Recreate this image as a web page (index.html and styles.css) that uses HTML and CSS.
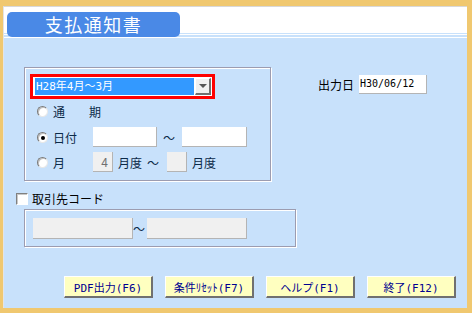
FILE: index.html
```html
<!DOCTYPE html>
<html lang="ja">
<head>
    <meta charset="UTF-8">
    <title>支払通知書</title>
    <link rel="stylesheet" href="styles.css">
</head>
<body>
    <div class="frame">
        <div class="window">
            <!-- Header -->
            <div class="header">
                <div class="title">支払通知書</div>
            </div>

            <!-- Main -->
            <div class="main">
                <div class="top-row">
                    <div class="group period-group">
                        <div class="combo-wrap">
                            <div class="combo">
                                <span class="combo-text">H28年4月～3月</span>
                                <span class="combo-btn">
                                    <svg width="8" height="5" viewBox="0 0 8 5"><path d="M0 0H8L4 4Z" fill="#555"/></svg>
                                </span>
                            </div>
                        </div>
                        <div class="row row-term">
                            <span class="radio"></span>
                            <span class="label">通</span>
                            <span class="label term-end">期</span>
                        </div>
                        <div class="row row-date">
                            <span class="radio checked"></span>
                            <span class="label label-col">日付</span>
                            <span class="field date-field"></span>
                            <span class="tilde date-tilde">～</span>
                            <span class="field date-field date-to"></span>
                        </div>
                        <div class="row row-month">
                            <span class="radio"></span>
                            <span class="label label-col">月</span>
                            <span class="field gray month-field">4</span>
                            <span class="label unit">月度</span>
                            <span class="tilde">～</span>
                            <span class="field gray month-field month-to"></span>
                            <span class="label unit">月度</span>
                        </div>
                    </div>

                    <div class="outdate">
                        <span class="outdate-label">出力日</span>
                        <span class="field outdate-field">H30/06/12</span>
                    </div>
                </div>

                <div class="check-row">
                    <span class="checkbox"></span>
                    <span class="check-label">取引先コード</span>
                </div>

                <div class="group code-group">
                    <span class="field gray code-field"></span>
                    <span class="tilde code-tilde">～</span>
                    <span class="field gray code-field"></span>
                </div>

                <!-- Function keys -->
                <div class="buttons">
                    <button class="fbtn">PDF出力(F6)</button>
                    <button class="fbtn">条件ﾘｾｯﾄ(F7)</button>
                    <button class="fbtn">ヘルプ(F1)</button>
                    <button class="fbtn">終了(F12)</button>
                </div>
            </div>
        </div>
    </div>
</body>
</html>
```

FILE: styles.css
```css
body {
    margin: 0;
    font-family: "Noto Sans CJK JP", "Noto Sans", sans-serif;
    font-size: 12px;
}

.frame {
    width: 472px;
    height: 313px;
    box-sizing: border-box;
    border-style: solid;
    border-color: #f0c870;
    border-width: 6px 5px 5px 3px;
}

.window {
    height: 100%;
    box-sizing: border-box;
    border-top: 1px solid #d8d8d8;
    border-left: 1px solid #e4e4e4;
    display: flex;
    flex-direction: column;
    background: #c8e1fb;
}

/* Header */
.header {
    height: 33px;
    flex-shrink: 0;
    background: linear-gradient(to bottom,
        #fff 0 26px,
        #c8e1fb 26px 27px,
        #fff 27px 28px,
        #c8e1fb 28px 30px,
        #fff 30px 31px,
        #c8e1fb 31px 33px);
}

.title {
    margin: 5px 0 0 3px;
    width: 173px;
    height: 25px;
    border-radius: 5px;
    background: #4a89e6;
    color: #fff;
    font-size: 18px;
    line-height: 25px;
    letter-spacing: 1.5px;
    text-align: center;
}

/* Main */
.main {
    flex: 1;
    padding: 27px 0 0 12px;
}

.top-row {
    display: flex;
    align-items: flex-start;
}

.group {
    border: 1px solid #9c9cb0;
    box-shadow: 1px 1px 0 #fff, inset 1px 1px 0 #fff;
    box-sizing: border-box;
}

.period-group {
    margin-left: 8px;
    width: 247px;
    height: 114px;
    padding: 6px 0 0 5px;
}

.combo-wrap {
    width: 185px;
    height: 25px;
    box-sizing: border-box;
    border: 3px solid #ff0000;
    padding: 1px;
    background: #fff;
}

.combo {
    height: 17px;
    display: flex;
    background: #fff;
}

.combo-text {
    flex: 1;
    margin: 0 1px;
    background: #3399ff;
    color: #fff;
    font-family: "DejaVu Sans Mono", "Noto Sans CJK JP", monospace;
    font-size: 11px;
    line-height: 17px;
    padding-left: 1px;
}

.combo-btn {
    width: 16px;
    height: 17px;
    box-sizing: border-box;
    background: #f0f0f0;
    border-top: 1px solid #fff;
    border-left: 1px solid #fff;
    border-right: 2px solid #707070;
    border-bottom: 2px solid #707070;
    display: flex;
    align-items: center;
    justify-content: center;
}

.row {
    display: flex;
    align-items: center;
    height: 20px;
    color: #0c2a48;
}

.row-term {
    margin-top: 2px;
}

.row-date {
    margin-top: 6px;
}

.row-month {
    margin-top: 5px;
}

.radio {
    width: 11px;
    height: 11px;
    margin-left: 7px;
    margin-right: 5px;
    border-radius: 50%;
    background: #fff;
    box-sizing: border-box;
    border: 1px solid;
    border-color: #7a7a7a #e8e8e8 #e8e8e8 #7a7a7a;
    box-shadow: inset 1px 1px 0 #c0c0c0;
    position: relative;
}

.radio.checked::after {
    content: "";
    position: absolute;
    left: 3px;
    top: 3px;
    width: 4px;
    height: 4px;
    border-radius: 50%;
    background: #000;
}

.term-end {
    margin-left: 24px;
}

.label-col {
    width: 40px;
}

.field {
    display: inline-block;
    box-sizing: border-box;
    background: #fff;
    border-right: 1px solid #b4b4b4;
    border-bottom: 1px solid #b4b4b4;
}

.field.gray {
    background: #f0f0f0;
}

.date-field {
    width: 64px;
    height: 20px;
}

.date-to {
    width: 65px;
}

.tilde {
    margin: 0 5px;
}

.date-tilde {
    margin: 0 7px 0 6px;
}

.month-field {
    width: 20px;
    height: 20px;
    color: #707070;
    text-align: right;
    padding-right: 4px;
    line-height: 19px;
}

.unit {
    margin-left: 5px;
}

.month-to {
    margin-left: 4px;
}

.row-month .tilde {
    margin: 0 4px 0 5px;
}

/* Output date */
.outdate {
    margin: 8px 0 0 47px;
    display: flex;
    align-items: center;
    color: #000;
}

.outdate-label {
    margin-right: 5px;
}

.outdate-field {
    width: 68px;
    height: 19px;
    line-height: 18px;
    padding-left: 1px;
    font-family: "DejaVu Sans Mono", monospace;
    font-size: 10px;
}

/* Checkbox */
.check-row {
    margin-top: 10px;
    height: 15px;
    display: flex;
    align-items: center;
}

.checkbox {
    width: 12px;
    height: 12px;
    margin-right: 4px;
    box-sizing: border-box;
    background: #fff;
    border: 1px solid;
    border-color: #808080 #fff #fff #808080;
    box-shadow: inset 1px 1px 0 #c8c8c8;
}

.check-label {
    color: #000;
}

.code-group {
    margin: 3px 0 0 8px;
    width: 272px;
    height: 38px;
    display: flex;
    align-items: center;
    padding-left: 8px;
}

.code-field {
    width: 100px;
    height: 21px;
}

.code-tilde {
    margin: 0 2px 0 0;
    color: #0c2a48;
}

/* Buttons */
.buttons {
    margin: 29px 0 0 48px;
    display: flex;
    gap: 12px;
}

.fbtn {
    width: 89px;
    height: 22px;
    padding: 0;
    box-sizing: border-box;
    background: #ffffc0;
    color: #000090;
    font-family: "DejaVu Sans Mono", "Noto Sans CJK JP", monospace;
    font-size: 11px;
    border-style: solid;
    border-width: 1px 2px 2px 1px;
    border-color: #fff #707070 #707070 #fff;
    cursor: pointer;
}
```
